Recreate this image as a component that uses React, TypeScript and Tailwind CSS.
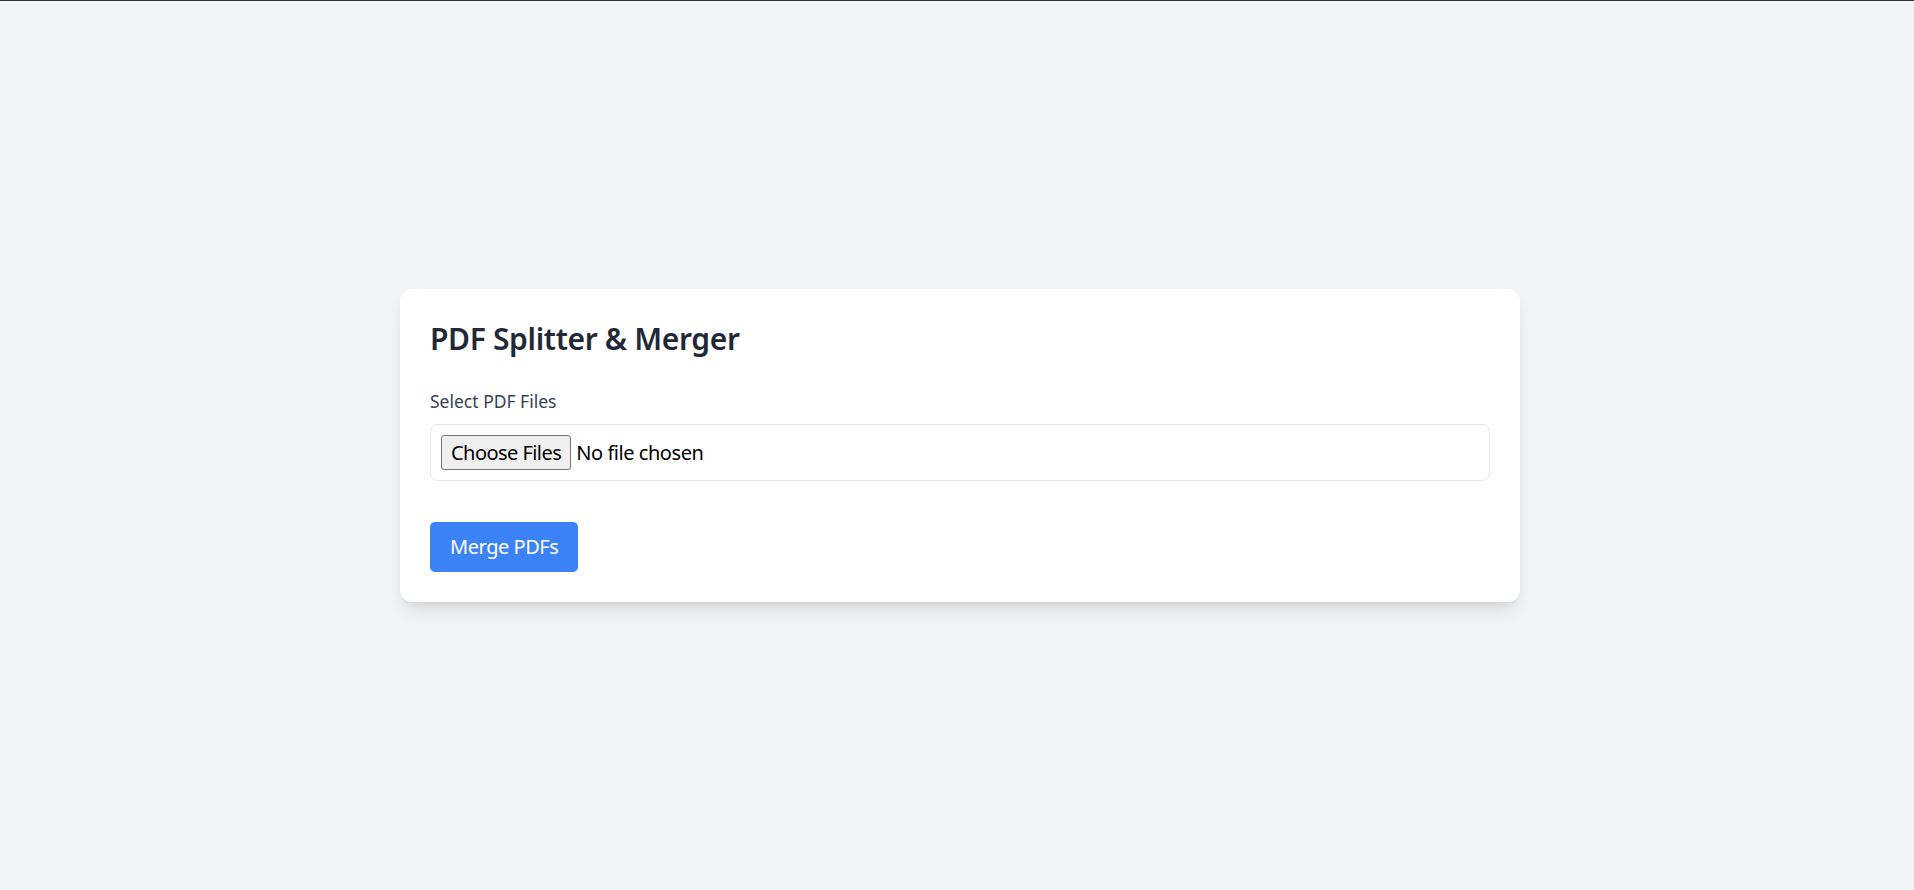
import { useState, type ChangeEvent } from "react";

const App = () => {
  const [files, setFiles] = useState<File[]>([]);

  const handleFilesChange = (event: ChangeEvent<HTMLInputElement>) => {
    setFiles(Array.from(event.target.files ?? []));
  };

  const handleMerge = () => {
    if (files.length < 2) {
      return;
    }
    // merging happens elsewhere; nothing to do without a backend
  };

  return (
    <div className="flex min-h-screen items-center justify-center border-t border-[#2d3338] bg-[#f3f4f6] pl-[6px] font-['Noto_Sans',sans-serif]">
      <div className="w-[1120px] rounded-[12px] bg-white p-[30px] shadow-[0_12px_19px_-4px_rgba(0,0,0,0.1),0_5px_8px_-5px_rgba(0,0,0,0.1)]">
        <h1 className="mb-[30px] text-[30px] font-semibold leading-[40px] tracking-[-0.35px] text-[#1f2937]">
          PDF Splitter &amp; Merger
        </h1>

        <label
          htmlFor="pdf-files"
          className="mb-[10px] block text-[17.5px] leading-[25px] text-[#374151]"
        >
          Select PDF Files
        </label>
        <input
          id="pdf-files"
          type="file"
          accept="application/pdf"
          multiple
          onChange={handleFilesChange}
          className="block w-full rounded-[7.5px] border border-[#e5e7eb] p-[10px] text-[20px] leading-[35px] tracking-[-0.45px] text-black file:mr-[5px] file:rounded-[3px] file:border file:border-solid file:border-[#767676] file:bg-[#efefef] file:px-[9px] file:py-[1.5px] file:text-[20px] file:leading-[30px] file:tracking-[-0.55px] file:text-black"
        />

        <div className="mt-[41px]">
          <button
            type="button"
            onClick={handleMerge}
            className="rounded-[5px] bg-[#3b82f6] px-[20px] py-[10px] text-[20px] leading-[30px] tracking-[-0.45px] text-white"
          >
            Merge PDFs
          </button>
        </div>
      </div>
    </div>
  );
};

export default App;
